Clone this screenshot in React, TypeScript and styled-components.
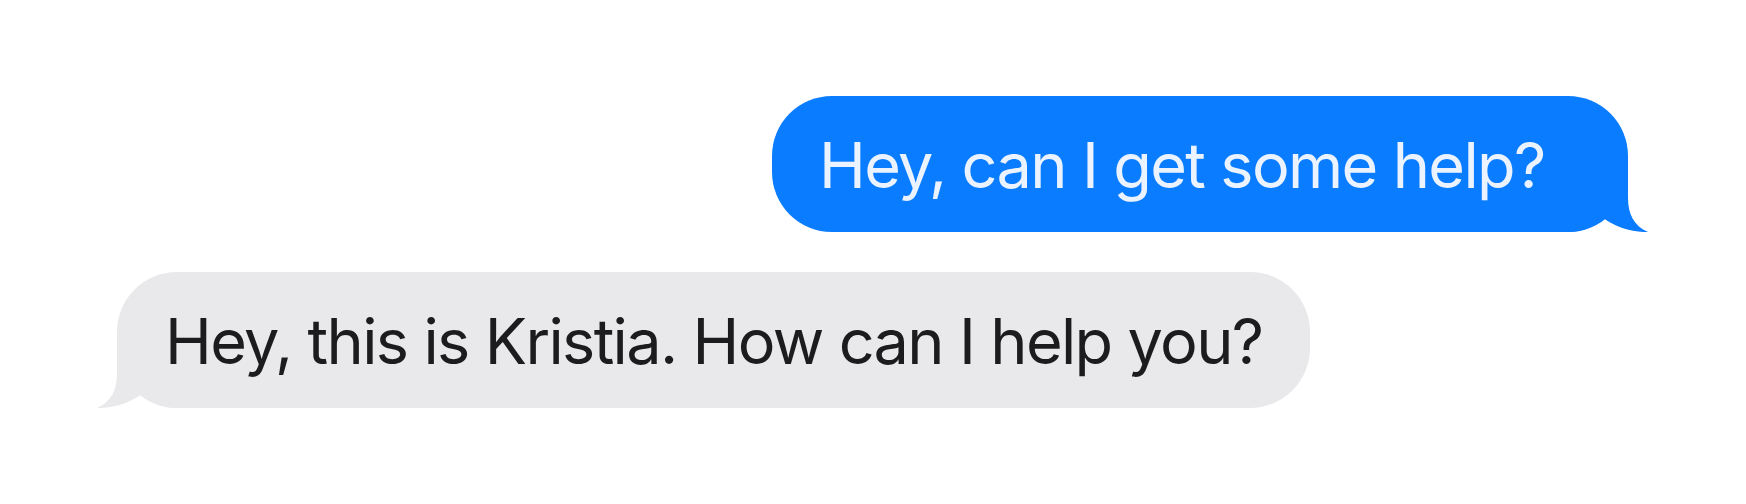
import styled, { createGlobalStyle } from 'styled-components';

const GlobalStyle = createGlobalStyle`
    html, body {
        margin: 0;
        padding: 0;
        background: #ffffff;
    }
    body {
        font-family: Inter, "Noto Sans", "Liberation Sans", sans-serif;
    }
`;

type side = 'sent' | 'received';

const theme = {
    sent: { bg: '#0a7cff', fg: '#eaf3ff' },
    received: { bg: '#e9e9eb', fg: '#1c1c1e' },
};

const messages: { id: number; from: side; text: string; width: number }[] = [
    { id: 1, from: 'sent', text: 'Hey, can I get some help?', width: 856 },
    { id: 2, from: 'received', text: 'Hey, this is Kristia. How can I help you?', width: 1193 },
];

const Tail = ({ from }: { from: side }) => (
    <TailSvg from={from} width="90" height="62" viewBox="0 0 90 62">
        <path
            d="M0 0 H70 V28 C70 44 76 56 90 62 C78 62 62 60 45 48 C37 56 26 62 10 62 H0 Z"
            fill={theme[from].bg}
        />
    </TailSvg>
);

const App = () => {
    return (
        <>
            <GlobalStyle />
            <Thread>
                {messages.map(m => (
                    <Bubble key={m.id} from={m.from} style={{ width: m.width }}>
                        <Text>{m.text}</Text>
                        <Tail from={m.from} />
                    </Bubble>
                ))}
            </Thread>
        </>
    );
};

export default App;

const Thread = styled.div`
    display: flex;
    flex-direction: column;
    gap: 40px;
    padding: 96px 118px 0 117px;
`;
const Bubble = styled.div<{ from: side }>`
    position: relative;
    box-sizing: border-box;
    height: 136px;
    display: flex;
    align-items: center;
    align-self: ${({ from }) => (from === 'sent' ? 'flex-end' : 'flex-start')};
    padding: 2px 0 0 ${({ from }) => (from === 'sent' ? '47px' : '48px')};
    border-radius: 60px;
    background: ${({ from }) => theme[from].bg};
    color: ${({ from }) => theme[from].fg};
`;
const Text = styled.span`
    position: relative;
    z-index: 1;
    font-size: 63px;
    line-height: 1;
    letter-spacing: -1.65px;
    white-space: nowrap;
`;
const TailSvg = styled.svg<{ from: side }>`
    position: absolute;
    bottom: 0;
    ${({ from }) => (from === 'sent' ? 'right: -20px;' : 'left: -20px; transform: scaleX(-1);')}
`;
